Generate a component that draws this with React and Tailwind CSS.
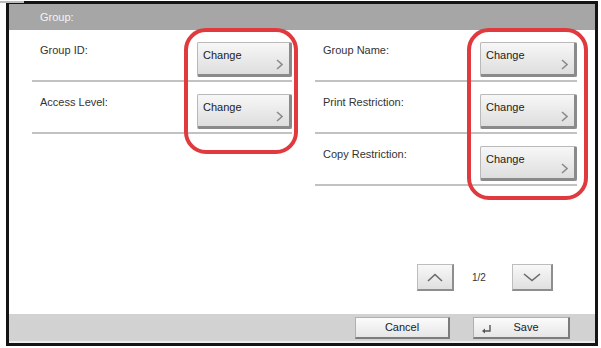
import React from "react";

const LEFT_ROWS = ["Group ID:", "Access Level:"];
const RIGHT_ROWS = ["Group Name:", "Print Restriction:", "Copy Restriction:"];

function Chevron() {
  return (
    <svg width="7" height="11" viewBox="0 0 7 11" className="absolute right-[6px] bottom-[4px]">
      <path d="M1 1 L6 5.5 L1 10" fill="none" stroke="#8c8c8c" strokeWidth="1.6" />
    </svg>
  );
}

function ChangeButton({ width }) {
  return (
    <div
      className={`relative mt-[12px] h-[35px] ${width} bg-gradient-to-b from-[#f7f7f7] to-[#dedede] border border-[#b9b9b9] border-r-[3px] border-b-[3px] border-r-[#8a8a8a] border-b-[#8a8a8a] rounded-[2px]`}
    >
      <span className="absolute left-[5px] top-[4px] text-[11px] text-[#222]">Change</span>
      <Chevron />
    </div>
  );
}

function Row({ label, width }) {
  return (
    <div className="flex h-[52px] border-b-2 border-[#c2c2c2]">
      <span className="pl-2 pt-[12px] text-[11px] text-[#333] flex-1">{label}</span>
      <ChangeButton width={width} />
    </div>
  );
}

function NavButton({ width, children }) {
  return (
    <div className={`flex h-[27px] ${width} items-center justify-center bg-gradient-to-b from-[#f8f8f8] to-[#e0e0e0] border border-[#bdbdbd] border-r-2 border-b-2 border-r-[#8e8e8e] border-b-[#8e8e8e]`}>
      {children}
    </div>
  );
}

export default function App() {
  return (
    <div className="w-[601px] h-[348px] bg-white relative" style={{ fontFamily: '"Liberation Sans", Arial, sans-serif' }}>
      <div className="absolute left-0 top-0 w-[24px] h-[2px] bg-[#bdbdbd]" />
      <div className="ml-[6px] mt-[1px] w-[592px] h-[345px] border-[3px] border-[#141414] flex flex-col">
        {/* header */}
        <div className="h-[26px] bg-[#a6a6a6] flex items-center pl-[31px] text-[11px] text-[#f4f4f4]">
          Group:
        </div>

        {/* body */}
        <div className="flex-1 flex flex-col">
          <div className="flex pl-[23px] pr-[18px] gap-[23px]">
            <div className="w-[260px] flex flex-col">
              {LEFT_ROWS.map((l) => (
                <Row key={l} label={l} width="w-[95px]" />
              ))}
            </div>
            <div className="flex-1 flex flex-col">
              {RIGHT_ROWS.map((l) => (
                <Row key={l} label={l} width="w-[97px]" />
              ))}
            </div>
          </div>

          <div className="mt-auto mb-[23px] flex items-center justify-end pr-[42px]">
            <NavButton width="w-[37px]">
              <svg width="16" height="9" viewBox="0 0 16 9">
                <path d="M1 8 L8 1.5 L15 8" fill="none" stroke="#6a6a6a" strokeWidth="1.6" />
              </svg>
            </NavButton>
            <span className="w-[58px] pl-[18px] text-[10px] text-[#333]">1/2</span>
            <NavButton width="w-[41px]">
              <svg width="18" height="9" viewBox="0 0 18 9">
                <path d="M1 1 L9 7.5 L17 1" fill="none" stroke="#6a6a6a" strokeWidth="1.6" />
              </svg>
            </NavButton>
          </div>
        </div>

        {/* footer */}
        <div className="h-[29px] bg-[#d2d2d2] border-b-2 border-[#ebebeb] flex items-start justify-end gap-[23px] pt-[3px] pr-[25px]">
          <div className="h-[22px] w-[95px] flex items-center justify-center bg-gradient-to-b from-[#fbfbfb] to-[#e6e6e6] border border-[#b0b0b0] border-r-2 border-b-2 border-r-[#7c7c7c] border-b-[#7c7c7c] text-[11px] text-[#222]">
            Cancel
          </div>
          <div className="relative h-[22px] w-[97px] flex items-center justify-center bg-gradient-to-b from-[#fbfbfb] to-[#e6e6e6] border border-[#b0b0b0] border-r-2 border-b-2 border-r-[#7c7c7c] border-b-[#7c7c7c] text-[11px] text-[#222]">
            <svg width="12" height="10" viewBox="0 0 12 10" className="absolute left-[7px] top-[6px]">
              <path d="M9 1 L9 7 L3 7" fill="none" stroke="#555" strokeWidth="1.4" />
              <path d="M1 7 L4 4.5 L4 9.5 Z" fill="#555" />
            </svg>
            <span className="pl-[10px]">Save</span>
          </div>
        </div>
      </div>

      {/* red highlight frames */}
      <div className="absolute left-[184px] top-[27px] w-[114px] h-[126px] rounded-[22px] border-4 border-[#e0393e]" />
      <div className="absolute left-[467px] top-[27px] w-[121px] h-[172px] rounded-[22px] border-4 border-[#e0393e]" />
    </div>
  );
}
